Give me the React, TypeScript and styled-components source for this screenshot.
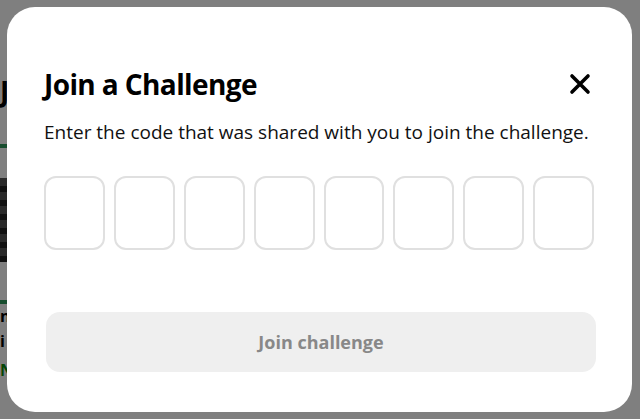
import React from "react";
import styled, { createGlobalStyle } from "styled-components";

const GlobalStyle = createGlobalStyle`
  html, body {
    margin: 0;
    padding: 0;
    width: 100%;
    height: 100%;
    overflow: hidden;
    font-family: "Open Sans", "Noto Sans", sans-serif;
  }
  #root {
    width: 100%;
    height: 100%;
  }
`;

const CODE_LENGTH = 8;

const App = () => {
  return (
    <>
      <GlobalStyle />
      <Page>
        <Behind>
          <PageTitle>Je</PageTitle>
          <GreenRule />
          <Thumb />
          <GreenRule />
          <CardText>n</CardText>
          <CardText>i</CardText>
          <CardTag>N</CardTag>
        </Behind>
        <Overlay>
          <Modal>
            <Header>
              <Title>Join a Challenge</Title>
              <CloseButton aria-label="Close">
                <svg width="22" height="22" viewBox="0 0 22 22">
                  <path
                    d="M3 3 L19 19 M19 3 L3 19"
                    stroke="#000"
                    strokeWidth="3.6"
                    strokeLinecap="round"
                  />
                </svg>
              </CloseButton>
            </Header>
            <Subtitle>
              Enter the code that was shared with you to join the challenge.
            </Subtitle>
            <CodeRow>
              {Array.from({ length: CODE_LENGTH }).map((_, i) => (
                <CodeBox key={i} maxLength={1} />
              ))}
            </CodeRow>
            <JoinButton disabled>Join challenge</JoinButton>
          </Modal>
        </Overlay>
      </Page>
    </>
  );
};

const Page = styled.div`
  position: relative;
  width: 100%;
  height: 100%;
  background: #fff;
  overflow: hidden;
`;

const Behind = styled.div`
  display: flex;
  flex-direction: column;
  width: 40px;
  padding-top: 74px;
`;

const PageTitle = styled.h1`
  margin: 0 0 36px;
  font-size: 28px;
  font-weight: 700;
  line-height: 34px;
  color: #000;
`;

const GreenRule = styled.div`
  height: 4px;
  background: #2f9a5c;
`;

const Thumb = styled.div`
  height: 84px;
  margin: 30px 0 38px;
  background: repeating-linear-gradient(
    180deg,
    #555 0px,
    #555 8px,
    #222 8px,
    #222 14px
  );
`;

const CardText = styled.div`
  font-size: 16px;
  font-weight: 700;
  line-height: 25px;
  color: #000;
  &:first-of-type {
    margin-top: 14px;
  }
`;

const CardTag = styled.div`
  margin-top: 4px;
  font-size: 16px;
  font-weight: 700;
  color: #0a8a0a;
  line-height: 25px;
`;

const Overlay = styled.div`
  position: absolute;
  inset: 0;
  background: rgba(0, 0, 0, 0.5);
  padding: 7px 8px 7px 7px;
  box-sizing: border-box;
`;

const Modal = styled.div`
  box-sizing: border-box;
  width: 625px;
  height: 405px;
  background: #fff;
  border-radius: 28px;
  padding: 55px 38px 40px 37px;
  display: flex;
  flex-direction: column;
`;

const Header = styled.div`
  display: flex;
  align-items: center;
  justify-content: space-between;
  height: 44px;
`;

const Title = styled.h2`
  margin: 0;
  font-size: 28px;
  font-weight: 700;
  line-height: 44px;
  color: #000;
  letter-spacing: -0.6px;
`;

const CloseButton = styled.button`
  border: none;
  background: none;
  padding: 0;
  width: 22px;
  height: 22px;
  margin-right: 3px;
  display: flex;
  cursor: pointer;
`;

const Subtitle = styled.p`
  margin: 13px 0 0;
  font-size: 19px;
  line-height: 26px;
  color: #111;
  white-space: nowrap;
`;

const CodeRow = styled.div`
  display: flex;
  gap: 9px;
  margin-top: 31px;
`;

const CodeBox = styled.input`
  flex: 1;
  min-width: 0;
  height: 74px;
  box-sizing: border-box;
  border: 2px solid #e0e0e0;
  border-radius: 12px;
  background: #fff;
  font-size: 28px;
  text-align: center;
  outline: none;
`;

const JoinButton = styled.button`
  margin-top: auto;
  margin-left: 2px;
  width: 550px;
  height: 60px;
  border: none;
  border-radius: 14px;
  background: #efefef;
  color: #888;
  font-family: "Open Sans", "Noto Sans", sans-serif;
  font-size: 18px;
  font-weight: 700;
`;

export default App;
